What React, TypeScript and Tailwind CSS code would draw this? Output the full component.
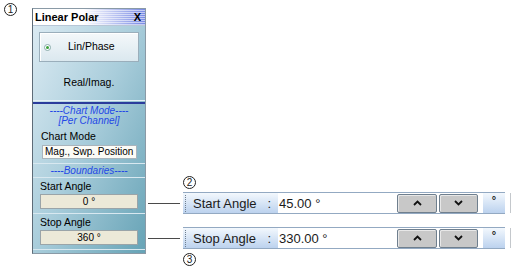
import React from 'react';

// small circled callout number
function Circled({ n }: { n: string }) {
  return (
    <span className="flex h-[13px] w-[13px] items-center justify-center rounded-full border border-[#222] text-[10px] leading-none text-[#222]">
      {n}
    </span>
  );
}

function Sep() {
  return <div className="h-px bg-[#d8e8f0]" />;
}

function Panel() {
  return (
    <div className="mt-[8px] flex h-[246px] w-[114px] flex-col border border-[#8a9aa6] border-l-[#5e6c78] bg-gradient-to-br from-[#deecf4] via-[#a9cddb] to-[#66a3b6] text-[11px] text-black">
      {/* title bar */}
      <div className="relative flex h-[17px] items-center border-b border-[#b8c6d6] bg-[linear-gradient(to_right,#ffffff_45%,#7789e4)] px-[2px]">
        <div className="absolute inset-0 bg-[repeating-linear-gradient(to_bottom,transparent_0px,transparent_1px,rgba(255,255,255,0.55)_1px,rgba(255,255,255,0.55)_2px)]" />
        <span className="relative text-[11px] font-bold leading-none">Linear Polar</span>
        <span className="relative ml-auto mr-[2px] text-[11px] font-bold leading-none">X</span>
      </div>

      {/* Lin/Phase button */}
      <div className="mx-[6px] mt-[6px] flex h-[30px] items-center border border-[#9aaebb] bg-gradient-to-b from-[#f4f8fa] to-[#dbe8ef] shadow-[inset_1px_1px_0_#fff]">
        <span className="ml-[4px] flex h-[7px] w-[7px] items-center justify-center rounded-full border border-[#8aa] bg-white">
          <span className="h-[3px] w-[3px] rounded-full bg-[#3aa03a]" />
        </span>
        <span className="ml-[17px] text-[10.5px]">Lin/Phase</span>
      </div>

      {/* Real/Imag */}
      <div className="flex h-[36px] items-center justify-center pt-[5px] text-[10.5px]">Real/Imag.</div>

      <div className="mt-[2px] h-px bg-[#e6f0f6]" />
      <div className="mt-px h-[2px] bg-[#2b3c9c]" />

      <div className="mt-[2px] flex flex-col items-center text-[10px] italic leading-[10px] text-[#2448e6]">
        <span>----Chart Mode----</span>
        <span>[Per Channel]</span>
      </div>

      <div className="mt-[4px] pl-[8px] text-[10.5px] leading-[12px]">Chart Mode</div>
      <div className="ml-[9px] mt-[3px] flex h-[14px] w-[95px] items-center border border-[#a9b4bc] bg-[#fbfbf6] pl-[2px] text-[10px] leading-none">
        Mag., Swp. Position
      </div>

      <div className="mt-[4px]"><Sep /></div>
      <div className="flex h-[13px] items-center justify-center text-[10px] italic leading-none text-[#2448e6]">----Boundaries----</div>
      <Sep />

      <div className="mt-[2px] pl-[7px] text-[10.5px] leading-[12px]">Start Angle</div>
      <div className="ml-[7px] mt-[2px] flex h-[15px] w-[98px] items-center justify-center border border-[#9aa4a8] bg-[#ece9d8] text-[10px] leading-none">
        0 °
      </div>
      <div className="mt-[4px]"><Sep /></div>

      <div className="mt-[2px] pl-[7px] text-[10.5px] leading-[12px]">Stop Angle</div>
      <div className="ml-[7px] mt-[2px] flex h-[15px] w-[98px] items-center justify-center border border-[#9aa4a8] bg-[#ece9d8] text-[10px] leading-none">
        360 °
      </div>
      <div className="mt-[4px]"><Sep /></div>
    </div>
  );
}

function ArrowBtn({ dir, w }: { dir: 'up' | 'down'; w: string }) {
  return (
    <div className={`${w} flex h-[19px] items-center justify-center rounded-[2px] border border-[#6f7f8e] bg-[#c8c8c8] shadow-[inset_1px_1px_0_#e8e8e8]`}>
      <svg width="9" height="6" viewBox="0 0 9 6">
        {dir === 'up' ? (
          <polyline points="1,5 4.5,1.5 8,5" fill="none" stroke="#111" strokeWidth="1.8" />
        ) : (
          <polyline points="1,1 4.5,4.5 8,1" fill="none" stroke="#111" strokeWidth="1.8" />
        )}
      </svg>
    </div>
  );
}

function AngleRow({ label, value }: { label: string; value: string }) {
  return (
    <div className="flex items-center">
      <div className="ml-[2px] h-px w-[32px] bg-[#4a4a4a]" />
      <div className="ml-[3px] flex h-[22px] items-stretch border-y border-[#93a9c2] text-[13px] text-[#1b1b1b]">
        <div className="flex w-[95px] items-center bg-gradient-to-b from-[#f3f8fd] to-[#bcd2ee]">
          <div className="ml-[2px] h-[17px] border-l border-dotted border-[#6f7f90]" />
          <span className="ml-[7px] leading-none">{label}</span>
          <span className="ml-auto mr-[7px] leading-none">:</span>
        </div>
        <div className="flex w-[117px] items-center bg-white pl-[1px] leading-none">{value}</div>
        <div className="flex items-center gap-[2px] bg-white pl-[2px] pr-[5px]">
          <ArrowBtn dir="up" w="w-[40px]" />
          <ArrowBtn dir="down" w="w-[39px]" />
        </div>
        <div className="flex w-[22px] justify-center bg-gradient-to-b from-[#f3f8fd] to-[#bcd2ee] pt-[2px] text-[11px] font-bold leading-none">°</div>
      </div>
      <div className="ml-[5px] h-[20px] w-px bg-[#c4c8cc]" />
    </div>
  );
}

export default function App() {
  return (
    <div className="flex h-[277px] w-[518px] overflow-hidden bg-white font-['Liberation_Sans',sans-serif]">
      <div className="w-[32px] pl-[4px] pt-[3px]">
        <Circled n="1" />
      </div>
      <Panel />
      <div className="flex flex-col pt-[176px]">
        <div className="pl-[37px]"><Circled n="2" /></div>
        <div className="mt-[3px]"><AngleRow label="Start Angle" value="45.00 °" /></div>
        <div className="mt-[13px]"><AngleRow label="Stop Angle" value="330.00 °" /></div>
        <div className="mt-[4px] pl-[37px]"><Circled n="3" /></div>
      </div>
    </div>
  );
}
